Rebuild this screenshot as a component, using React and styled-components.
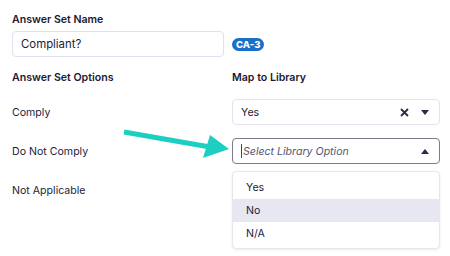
import React from "react";
import styled, { createGlobalStyle } from "styled-components";

const GlobalStyle = createGlobalStyle`
    body {
        margin: 0;
        background: #ffffff;
        font-family: Inter, "Noto Sans", sans-serif;
        color: #1c1c3b;
    }
`;

const options = [
    { name: "Comply", value: "Yes" },
    { name: "Do Not Comply", open: true },
    { name: "Not Applicable" },
];

const menuItems = ["Yes", "No", "N/A"];

function App() {
    return (
        <Page>
            <GlobalStyle />
            <Label>Answer Set Name</Label>
            <NameRow>
                <TextInput>Compliant?</TextInput>
                <Badge>CA-3</Badge>
            </NameRow>
            <Grid>
                <Label>Answer Set Options</Label>
                <Label>Map to Library</Label>
                {options.map((opt) => (
                    <React.Fragment key={opt.name}>
                        <OptionName>{opt.name}</OptionName>
                        {opt.name === "Not Applicable" ? (
                            <div />
                        ) : (
                            <SelectWrap>
                                <Select $open={opt.open}>
                                    {opt.value ? (
                                        <Value>{opt.value}</Value>
                                    ) : (
                                        <Placeholder>
                                            <Caret />
                                            Select Library Option
                                        </Placeholder>
                                    )}
                                    <Icons>
                                        {opt.value && (
                                            <svg width="9" height="9" viewBox="0 0 9 9">
                                                <path
                                                    d="M1 1L8 8M8 1L1 8"
                                                    stroke="#2a2a48"
                                                    strokeWidth="1.8"
                                                />
                                            </svg>
                                        )}
                                        <svg width="8" height="5" viewBox="0 0 8 5">
                                            <path
                                                d={opt.open ? "M0 5L4 0L8 5Z" : "M0 0L8 0L4 5Z"}
                                                fill="#2a2a48"
                                            />
                                        </svg>
                                    </Icons>
                                </Select>
                                {opt.open && (
                                    <Menu>
                                        {menuItems.map((item) => (
                                            <MenuItem key={item} $active={item === "No"}>
                                                {item}
                                            </MenuItem>
                                        ))}
                                    </Menu>
                                )}
                            </SelectWrap>
                        )}
                    </React.Fragment>
                ))}
            </Grid>
            <Arrow width="450" height="256" viewBox="0 0 450 256">
                <line x1="124" y1="132" x2="210" y2="147" stroke="#1dcfc3" strokeWidth="5" />
                <path d="M210 135L229 149L203 158Z" fill="#1dcfc3" />
            </Arrow>
        </Page>
    );
}

const Page = styled.div`
    position: relative;
    width: 450px;
    height: 256px;
    box-sizing: border-box;
    padding: 12px 0 0 12px;
`;

const Label = styled.div`
    font-size: 10.6px;
    font-weight: 600;
    line-height: 16px;
    color: #1a1a30;
`;

const NameRow = styled.div`
    display: flex;
    align-items: center;
    gap: 8px;
    margin-top: 3px;
`;

const TextInput = styled.div`
    width: 212px;
    height: 26px;
    box-sizing: border-box;
    border: 1px solid #dfe1ec;
    border-radius: 4px;
    padding: 0 8px;
    display: flex;
    align-items: center;
    font-size: 11.4px;
`;

const Badge = styled.span`
    background: #1b6fc8;
    color: #fff;
    font-size: 9.5px;
    font-weight: 800;
    line-height: 13px;
    padding: 0 4px;
    border-radius: 7px;
`;

const Grid = styled.div`
    display: grid;
    grid-template-columns: 220px 208px;
    grid-auto-rows: 26px;
    grid-template-rows: 16px;
    row-gap: 13px;
    margin-top: 13px;
    align-items: center;
`;

const OptionName = styled.div`
    font-size: 10.6px;
    color: #1c1c3b;
`;

const SelectWrap = styled.div`
    position: relative;
    height: 26px;
`;

const Select = styled.div`
    height: 26px;
    box-sizing: border-box;
    border: 1px solid ${(p) => (p.$open ? "#7b7b8c" : "#e2e3ee")};
    border-radius: 4px;
    padding: 0 10px 0 8px;
    display: flex;
    align-items: center;
    justify-content: space-between;
    font-size: 10.6px;
`;

const Value = styled.span`
    color: #1c1c3b;
`;

const Placeholder = styled.span`
    display: flex;
    align-items: center;
    font-style: italic;
    color: #55556e;
`;

const Caret = styled.span`
    width: 1px;
    height: 14px;
    background: #444;
    margin-right: 1px;
`;

const Icons = styled.div`
    display: flex;
    align-items: center;
    gap: 12px;
`;

const Menu = styled.div`
    position: absolute;
    top: 33px;
    left: 0;
    right: 0;
    background: #fff;
    border: 1px solid #e6e6ee;
    border-radius: 4px;
    box-shadow: 0 1px 3px rgba(0, 0, 0, 0.08);
    padding: 4px 0 3px;
`;

const MenuItem = styled.div`
    height: 23px;
    display: flex;
    align-items: center;
    padding-left: 13px;
    font-size: 10.6px;
    color: #1c1c3b;
    background: ${(p) => (p.$active ? "#e7e7f2" : "transparent")};
`;

const Arrow = styled.svg`
    position: absolute;
    top: 0;
    left: 0;
    pointer-events: none;
`;

export default App;
